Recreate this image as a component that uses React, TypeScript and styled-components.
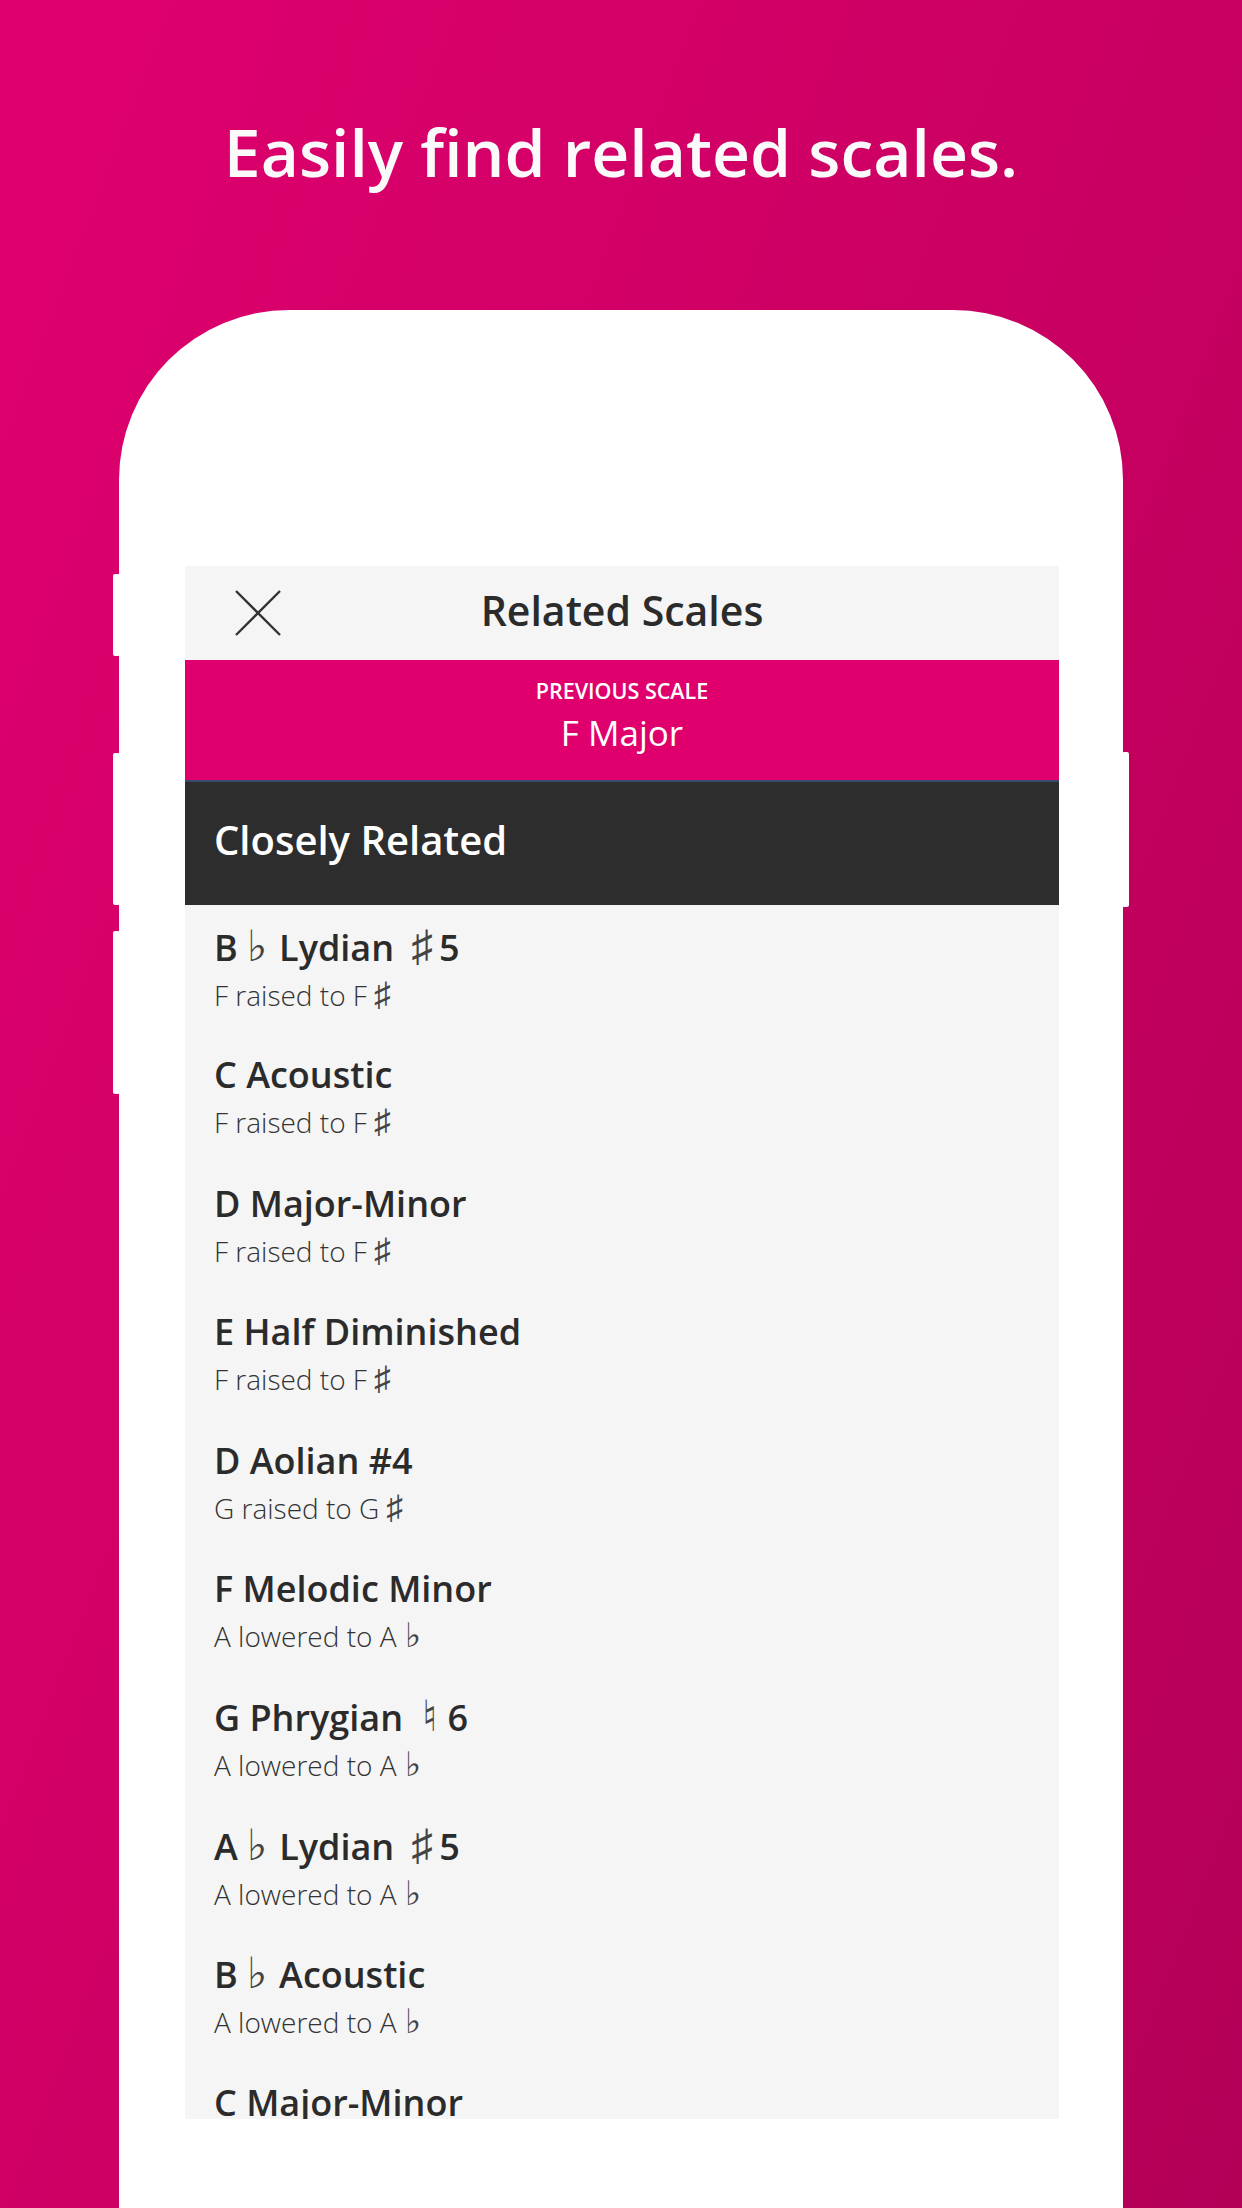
import React, { FC, Fragment } from 'react'
import styled, { createGlobalStyle } from 'styled-components'

interface Scale {
  name: React.ReactNode
  change: React.ReactNode
}

const GlobalStyle = createGlobalStyle`
  html, body {
    margin: 0;
    padding: 0;
  }
  body {
    font-family: "Open Sans", "Noto Sans", sans-serif;
  }
`

const Page = styled.div`
  width: 1242px;
  height: 2208px;
  overflow: hidden;
  display: flex;
  flex-direction: column;
  align-items: center;
  background: linear-gradient(111deg, #e0006f 0%, #cc0063 50%, #b30057 100%);
`

const Headline = styled.h1`
  margin: 0;
  padding-top: 111px;
  font-size: 66px;
  line-height: 80px;
  font-weight: 600;
  color: #fafafa;
`

const Phone = styled.div`
  position: relative;
  flex-shrink: 0;
  margin-top: 119px;
  width: 1004px;
  height: 1950px;
  box-sizing: border-box;
  padding: 256px 64px 0 66px;
  background: #ffffff;
  border-radius: 170px 170px 0 0;
`

const SideKey = styled.div<{ $side: 'left' | 'right'; $top: number; $height: number }>`
  position: absolute;
  ${(p) => (p.$side === 'left' ? 'left: -6px;' : 'right: -6px;')}
  top: ${(p) => p.$top}px;
  width: 7px;
  height: ${(p) => p.$height}px;
  background: #ffffff;
  border-radius: 2px;
`

const Screen = styled.div`
  width: 874px;
  display: flex;
  flex-direction: column;
`

const Toolbar = styled.div`
  height: 94px;
  display: grid;
  grid-template-columns: 1fr auto 1fr;
  align-items: center;
  background: #f5f5f5;
`

const CloseButton = styled.button`
  justify-self: start;
  margin-left: 50px;
  padding: 0;
  border: 0;
  background: none;
  width: 46px;
  height: 46px;
  display: flex;
`

const ToolbarTitle = styled.div`
  font-size: 41px;
  font-weight: 600;
  color: #2b2b2b;
  padding-bottom: 6px;
`

const Current = styled.div`
  height: 120px;
  box-sizing: border-box;
  padding-top: 18px;
  display: flex;
  flex-direction: column;
  align-items: center;
  background: #df006e;
  color: #ffffff;
`

const Eyebrow = styled.div`
  font-size: 21.5px;
  line-height: 26px;
  font-weight: 600;
  text-transform: uppercase;
`

const CurrentName = styled.div`
  margin-top: 9px;
  font-size: 35px;
  line-height: 40px;
  font-weight: 400;
`

const SectionHeader = styled.div`
  height: 125px;
  box-sizing: border-box;
  border-top: 2px solid #3a4a6e;
  padding: 0 29px 9px;
  display: flex;
  align-items: center;
  background: #2d2d2d;
  color: #ffffff;
  font-size: 40px;
  font-weight: 600;
`

const List = styled.div`
  height: 1214px;
  overflow: hidden;
  box-sizing: border-box;
  padding-top: 20px;
  background: #f5f5f5;
`

const Item = styled.div`
  height: 128.4px;
  padding: 0 29px;
`

const ItemName = styled.div`
  font-size: 36px;
  line-height: 44px;
  font-weight: 600;
  color: #2b2b2b;
  white-space: nowrap;
`

const ItemChange = styled.div`
  margin-top: 7px;
  font-size: 28px;
  line-height: 36px;
  font-weight: 300;
  color: #333333;
  white-space: nowrap;
`

// sharp / flat / natural signs: larger and lighter than the text around them
const Acc = styled.span<{ $before: number; $after: number }>`
  display: inline-block;
  font-family: "DejaVu Sans", sans-serif;
  font-weight: 200;
  font-size: 1.2em;
  line-height: 1;
  color: #444444;
  margin: 0 ${(p) => p.$after}px 0 ${(p) => p.$before}px;
`

const flat = (before = 9, after = 3) => (
  <Acc $before={before} $after={after}>
    ♭
  </Acc>
)
const sharp = (before = 7, after = 4) => (
  <Acc $before={before} $after={after}>
    ♯
  </Acc>
)
const natural = (before = 10, after = 10) => (
  <Acc $before={before} $after={after}>
    ♮
  </Acc>
)

const scales: Scale[] = [
  { name: <>B{flat()} Lydian {sharp(8, 6)}5</>, change: <>F raised to F{sharp()}</> },
  { name: 'C Acoustic', change: <>F raised to F{sharp()}</> },
  { name: 'D Major-Minor', change: <>F raised to F{sharp()}</> },
  { name: 'E Half Diminished', change: <>F raised to F{sharp()}</> },
  { name: 'D Aolian #4', change: <>G raised to G{sharp()}</> },
  { name: 'F Melodic Minor', change: <>A lowered to A{flat(8, 0)}</> },
  { name: <>G Phrygian {natural()}6</>, change: <>A lowered to A{flat(8, 0)}</> },
  { name: <>A{flat()} Lydian {sharp(8, 6)}5</>, change: <>A lowered to A{flat(8, 0)}</> },
  { name: <>B{flat()} Acoustic</>, change: <>A lowered to A{flat(8, 0)}</> },
  { name: 'C Major-Minor', change: <>A lowered to A{flat(8, 0)}</> },
]

const CloseIcon: FC = () => (
  <svg width="46" height="46" viewBox="0 0 46 46">
    <path d="M1 1 L45 45 M45 1 L1 45" stroke="#333333" strokeWidth="2.4" fill="none" />
  </svg>
)

const App: FC = () => {
  return (
    <Fragment>
      <GlobalStyle />
      <Page>
        <Headline>Easily find related scales.</Headline>
        <Phone>
          <SideKey $side="left" $top={264} $height={82} />
          <SideKey $side="left" $top={443} $height={152} />
          <SideKey $side="left" $top={621} $height={163} />
          <SideKey $side="right" $top={442} $height={155} />
          <Screen>
            <Toolbar>
              <CloseButton aria-label="Close">
                <CloseIcon />
              </CloseButton>
              <ToolbarTitle>Related Scales</ToolbarTitle>
              <span />
            </Toolbar>
            <Current>
              <Eyebrow>Previous Scale</Eyebrow>
              <CurrentName>F Major</CurrentName>
            </Current>
            <SectionHeader>Closely Related</SectionHeader>
            <List>
              {scales.map((s, i) => (
                <Item key={i}>
                  <ItemName>{s.name}</ItemName>
                  <ItemChange>{s.change}</ItemChange>
                </Item>
              ))}
            </List>
          </Screen>
        </Phone>
      </Page>
    </Fragment>
  )
}

export default App
